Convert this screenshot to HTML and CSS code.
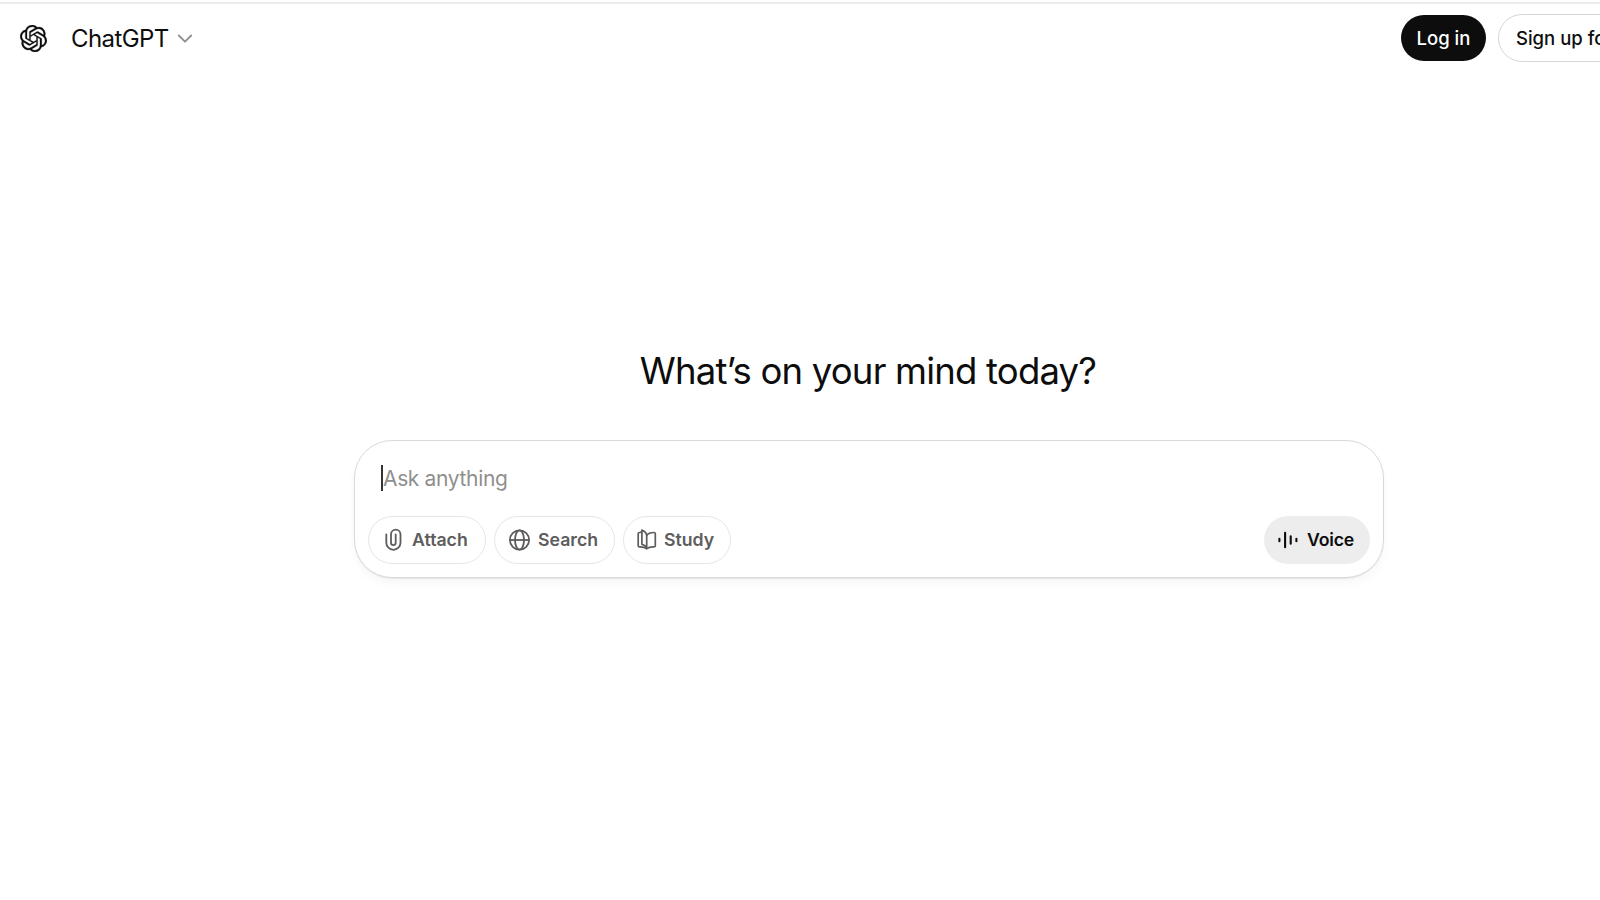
FILE: index.html
```html
<!DOCTYPE html>
<html lang="en">
<head>
  <meta charset="UTF-8" />
  <meta name="viewport" content="width=device-width, initial-scale=1" />
  <title>ChatGPT</title>
  <link rel="stylesheet" href="styles.css">
</head>
<body>

  <header>
    <a href="#" class="logo" aria-label="ChatGPT home">
      <svg width="27" height="27" viewBox="0 0 24 24" fill="currentColor" stroke="currentColor" stroke-width="0.25">
        <path d="M22.2819 9.8211a5.9847 5.9847 0 0 0-.5157-4.9108 6.0462 6.0462 0 0 0-6.5098-2.9A6.0651 6.0651 0 0 0 4.9807 4.1818a5.9847 5.9847 0 0 0-3.9977 2.9 6.0462 6.0462 0 0 0 .7427 7.0966 5.98 5.98 0 0 0 .511 4.9107 6.051 6.051 0 0 0 6.5146 2.9001A5.9847 5.9847 0 0 0 13.2599 24a6.0557 6.0557 0 0 0 5.7718-4.2058 5.9894 5.9894 0 0 0 3.9977-2.9001 6.0557 6.0557 0 0 0-.7475-7.0729zm-9.022 12.6081a4.4755 4.4755 0 0 1-2.8764-1.0408l.1419-.0804 4.7783-2.7582a.7948.7948 0 0 0 .3927-.6813v-6.7369l2.02 1.1686a.071.071 0 0 1 .038.052v5.5826a4.504 4.504 0 0 1-4.4945 4.4944zm-9.6607-4.1254a4.4708 4.4708 0 0 1-.5346-3.0137l.142.0852 4.783 2.7582a.7712.7712 0 0 0 .7806 0l5.8428-3.3685v2.3324a.0804.0804 0 0 1-.0332.0615L9.74 19.9502a4.4992 4.4992 0 0 1-6.1408-1.6464zM2.3408 7.8956a4.485 4.485 0 0 1 2.3655-1.9728V11.6a.7664.7664 0 0 0 .3879.6765l5.8144 3.3543-2.0201 1.1685a.0757.0757 0 0 1-.071 0l-4.8303-2.7865A4.504 4.504 0 0 1 2.3408 7.872zm16.5963 3.8558L13.1038 8.364 15.1192 7.2a.0757.0757 0 0 1 .071 0l4.8303 2.7913a4.4944 4.4944 0 0 1-.6765 8.1042v-5.6772a.79.79 0 0 0-.407-.667zm2.0107-3.0231l-.142-.0852-4.7735-2.7818a.7759.7759 0 0 0-.7854 0L9.409 9.2297V6.8974a.0662.0662 0 0 1 .0284-.0615l4.8303-2.7866a4.4992 4.4992 0 0 1 6.6802 4.66zM8.3065 12.863l-2.02-1.1638a.0804.0804 0 0 1-.038-.0567V6.0742a4.4992 4.4992 0 0 1 7.3757-3.4537l-.142.0805L8.704 5.459a.7948.7948 0 0 0-.3927.6813zm1.0976-2.3654l2.602-1.4998 2.6069 1.4998v2.9994l-2.5974 1.4997-2.6067-1.4997Z"/>
      </svg>
    </a>
    <button class="model-btn">
      <span>ChatGPT</span>
      <svg width="16" height="10" viewBox="0 0 16 10" fill="none" stroke="currentColor" stroke-width="1.8" stroke-linecap="round" stroke-linejoin="round">
        <path d="M1.8 2.5 8 8.7l6.2-6.2"/>
      </svg>
    </button>
    <div class="auth-btns">
      <button class="login-btn">Log in</button>
      <button class="signup-btn">Sign up for free</button>
    </div>
  </header>

  <main>
    <h1>What’s on your mind today?</h1>

    <div class="composer">
      <div class="prompt"><span class="caret"></span><span class="placeholder">Ask anything</span></div>

      <div class="tools">
        <button class="tool-btn attach-btn">
          <svg width="22" height="24" viewBox="0 0 22 24" fill="none" stroke="currentColor" stroke-width="1.8" stroke-linecap="round">
            <path d="M4.3 6.5v8.2a7.1 7.1 0 0 0 14.2 0V6.4a4.75 4.75 0 0 0-9.5 0v8.3a2.35 2.35 0 0 0 4.7 0V6.5"/>
          </svg>
          <span>Attach</span>
        </button>
        <button class="tool-btn search-btn">
          <svg width="22" height="22" viewBox="0 0 22 22" fill="none" stroke="currentColor" stroke-width="1.8">
            <circle cx="10.5" cy="11" r="9.6"/>
            <ellipse cx="10.5" cy="11" rx="4.5" ry="9.6"/>
            <path d="M.9 11h19.2"/>
          </svg>
          <span>Search</span>
        </button>
        <button class="tool-btn study-btn">
          <svg width="20" height="22" viewBox="0 0 20 22" fill="none" stroke="currentColor" stroke-width="1.7" stroke-linejoin="round">
            <path d="M9.7 19.6V6.7C9.7 4.5 7.5 2.1 4.9 1.1v14.2c2.4.5 4.3 2.3 4.8 4.3z"/>
            <path d="M4.9 3.2 2.3 3.5a1.2 1.2 0 0 0-1.1 1.2v12c0 .7.6 1.2 1.3 1.2 2.8-.2 5.2.3 7.2 1.7 2-1.5 4.2-1.9 7.2-1.7.8 0 1.4-.5 1.4-1.2v-12c0-.7-.6-1.2-1.3-1.2-3 0-5.800.5-7.300 3"/>
          </svg>
          <span>Study</span>
        </button>
        <button class="voice-btn">
          <svg width="22" height="20" viewBox="0 0 22 20" fill="none" stroke="currentColor" stroke-width="2.1" stroke-linecap="round">
            <path d="M2.4 8.800v2.400M8.100 2.800v14.400M13.700 6.200v7.600M19.400 8.800v2.400"/>
          </svg>
          <span>Voice</span>
        </button>
      </div>
    </div>
  </main>

</body>
</html>
```
FILE: styles.css
```css
* {
  box-sizing: border-box;
}
body {
  font-family: Inter, 'Liberation Sans', sans-serif;
  background: #fff;
  color: #0d0d0d;
  margin: 0;
  height: 900px;
  overflow: hidden;
}
button {
  font-family: inherit;
  color: inherit;
  background: none;
  border: none;
  padding: 0;
  margin: 0;
  white-space: nowrap;
  cursor: pointer;
}
svg {
  display: block;
  flex: none;
}
header {
  display: flex;
  align-items: center;
  height: 70px;
  margin-top: 2px;
  padding-left: 20px;
  border-top: 2px solid #ebebeb;
}
.logo {
  color: #0d0d0d;
}
.model-btn {
  display: flex;
  align-items: center;
  gap: 8px;
  margin-left: 24px;
  font-size: 24px;
  letter-spacing: -0.6px;
}
.model-btn svg {
  color: #8f8f8f;
}
.auth-btns {
  display: flex;
  align-items: center;
  flex: none;
  gap: 12px;
  width: 199px;
  margin-left: auto;
}
.login-btn,
.signup-btn {
  flex: none;
  font-size: 18.5px;
  font-weight: 500;
}
.login-btn {
  width: 85px;
  height: 46px;
  border-radius: 23px;
  background: #0d0d0d;
  color: #fff;
}
.signup-btn {
  height: 48px;
  padding: 0 17px;
  border: 1px solid #d6d6d6;
  border-radius: 24px;
}
main {
  width: 1030px;
  margin-left: 354px;
  padding-top: 274px;
}
h1 {
  margin: 0 0 44px;
  padding-right: 2px;
  font-size: 36.5px;
  font-weight: 400;
  line-height: 50px;
  letter-spacing: -0.8px;
  text-align: center;
}
.composer {
  height: 138px;
  padding: 19px 13px 13px;
  border: 1px solid #d9d9d9;
  border-radius: 38px;
  box-shadow: 0 1px 1px rgba(0,0,0,0.08), 0 6px 10px rgba(0,0,0,0.03);
}
.prompt {
  display: flex;
  align-items: center;
  height: 36px;
  padding-left: 13px;
}
.caret {
  width: 2px;
  height: 26px;
  background: #333;
}
.placeholder {
  font-size: 21px;
  letter-spacing: -0.35px;
  color: #8f8f8f;
}
.tools {
  display: flex;
  gap: 8px;
  margin-top: 20px;
}
.tool-btn,
.voice-btn {
  display: flex;
  align-items: center;
  height: 48px;
  padding-bottom: 1px;
  border-radius: 24px;
  font-size: 17.7px;
  font-weight: 600;
}
.tool-btn {
  border: 1px solid #e6e6e6;
  color: #5d5d5d;
}
.attach-btn {
  width: 118px;
  padding-left: 13px;
  gap: 8px;
}
.search-btn {
  width: 121px;
  padding-left: 14px;
  gap: 7px;
}
.study-btn {
  width: 108px;
  padding-left: 13px;
  gap: 7px;
}
.voice-btn {
  width: 106px;
  margin-left: auto;
  padding-left: 13px;
  gap: 8px;
  background: #ededed;
  letter-spacing: -0.2px;
}
```
